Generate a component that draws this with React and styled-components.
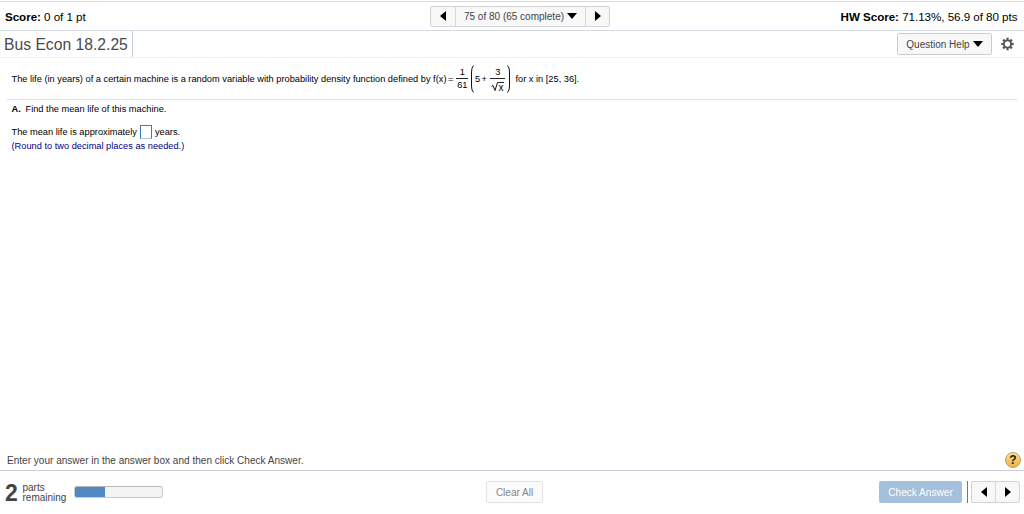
import React from 'react';
import styled, { createGlobalStyle } from 'styled-components';

const GlobalStyle = createGlobalStyle`
  * { box-sizing: border-box; }
  body { margin: 0; background: #fff; overflow: hidden; }
  button { font: inherit; color: inherit; margin: 0; padding: 0; }
`;

const Page = styled.div`
  display: flex;
  flex-direction: column;
  width: 1024px;
  height: 514px;
  padding-top: 1px;
  font-family: "Liberation Sans", Arial, sans-serif;
  color: #000;
  white-space: nowrap;
`;

const ScoreBar = styled.header`
  display: grid;
  grid-template-columns: 425px 180px 1fr;
  align-items: center;
  height: 30px;
  padding: 0 6.5px 0 5px;
  border-top: 1px solid #d9dcdf;
  border-bottom: 1px solid #d3dae2;
  font-size: 11.6px;
`;

const Score = styled.div`
  justify-self: ${(p) => (p.$end ? 'end' : 'start')};
  letter-spacing: -0.03px;
  padding-top: 1px;
`;

const ButtonGroup = styled.div`
  display: flex;
  height: ${(p) => p.$height || 21}px;
  border: 1px solid #d2d2d2;
  border-radius: 2px;
  background: #f8f8f8;
`;

const Segment = styled.button`
  display: flex;
  align-items: center;
  justify-content: center;
  gap: 3px;
  width: ${(p) => p.$width}px;
  border: 0;
  border-left: ${(p) => (p.$divided ? '1px solid #d8d8d8' : '0')};
  background: transparent;
  color: #444;
  font-size: 10px;
`;

const TitleBar = styled.div`
  display: flex;
  justify-content: space-between;
  height: 27px;
  padding-right: 10px;
  border-bottom: 1px solid #f1f1f1;
`;

const Title = styled.h1`
  width: 133px;
  height: 26px;
  margin: 0;
  padding-left: 4px;
  border-right: 1px solid #c4cedd;
  color: #4a4a4a;
  font-size: 15.7px;
  font-weight: 400;
  line-height: 27px;
`;

const Tools = styled.div`
  display: flex;
  align-items: center;
  gap: 9px;
`;

const HelpButton = styled.button`
  display: flex;
  align-items: center;
  justify-content: center;
  gap: 3px;
  width: 95px;
  height: 22px;
  border: 1px solid #ccc;
  border-radius: 2px;
  background: #f8f8f8;
  color: #444;
  font-size: 10px;
`;

const Content = styled.main`
  display: flex;
  flex-direction: column;
  flex: 1;
  padding: 0 7px;
  font-size: 9.26px;
`;

const Problem = styled.p`
  display: flex;
  align-items: center;
  height: 42px;
  margin: 0;
  padding: 0 0 0 4.5px;
  border-bottom: 1px solid #e0e0e0;
`;

const Sentence = styled.span`
  margin-left: ${(p) => p.$left || 0}px;
  padding-top: 1px;
`;

const Operator = styled.span`
  margin-left: 1.5px;
`;

const Fraction = styled.span`
  display: flex;
  flex-direction: column;
  align-items: center;
  width: ${(p) => p.$width}px;
  margin: 0 ${(p) => p.$right}px 0 ${(p) => p.$left}px;
  line-height: 12px;
`;

const Numerator = styled.span`
  align-self: stretch;
  height: 13px;
  border-bottom: 1px solid #222;
  text-align: center;
`;

const Denominator = styled.span`
  display: flex;
  height: 13px;
`;

const Radicand = styled.span`
  height: 11px;
  margin-top: 3px;
  padding: 0 1px 0 0;
  border-top: 1px solid #222;
  font-size: 10px;
  line-height: 9px;
`;

const Line = styled.p`
  display: flex;
  align-items: center;
  height: ${(p) => p.$height}px;
  margin: ${(p) => p.$top || 0}px 0 0 4.5px;
  color: ${(p) => p.$color || '#000'};
`;

const PartLabel = styled.b`
  width: 14px;
`;

const AnswerBox = styled.input`
  width: 12px;
  height: 14px;
  margin: 0 3px;
  padding: 0;
  border: 1px solid #3c7cae;
  border-bottom-color: #a9c9dc;
  border-radius: 0;
  background: #fff;
`;

const Hint = styled.div`
  display: flex;
  align-items: center;
  justify-content: space-between;
  height: 20px;
  padding: 0 3px 0 7px;
  color: #444;
  font-size: 10.05px;
`;

const Footer = styled.footer`
  display: grid;
  grid-template-columns: 481px 57px 1fr;
  align-items: center;
  height: 44px;
  padding: 0 4px 1px 5px;
  border-top: 1px solid #cfcfdc;
`;

const Progress = styled.div`
  display: flex;
  align-items: center;
`;

const Count = styled.b`
  width: 17.5px;
  color: #444;
  font-size: 23px;
  line-height: 24px;
  padding-top: 1px;
`;

const CountLabel = styled.span`
  width: 51.5px;
  padding-top: 1px;
  color: #444;
  font-size: 10px;
  line-height: 10px;
`;

const Track = styled.div`
  width: 89px;
  height: 12px;
  overflow: hidden;
  border: 1px solid #ccc;
  border-top-color: #b8b8b8;
  border-radius: 3px;
  background: #f3f3f3;
`;

const Fill = styled.div`
  width: 29px;
  height: 10px;
  background: #4f8ac5;
  box-shadow: 0 0 0 1px #4f8ac5;
`;

const ClearButton = styled.button`
  height: 22px;
  border: 1px solid #e2e2e2;
  border-radius: 2px;
  background: #fbfbfb;
  color: #858585;
  font-size: 10px;
`;

const Actions = styled.div`
  display: flex;
  align-items: center;
  justify-self: end;
`;

const CheckButton = styled.button`
  width: 83px;
  height: 22px;
  border: 0;
  border-radius: 2px;
  background: #a4c0dc;
  color: #fff;
  font-size: 10.1px;
`;

const Divider = styled.span`
  width: 1px;
  height: 22px;
  margin: 0 3px 0 5px;
  background: #777;
`;

const Svg = styled.svg`
  display: block;
  flex: none;
`;

const arrows = {
  left: ['0 0 6 10', 'M6 0V10L0 5Z', 6, 10],
  right: ['0 0 6 10', 'M0 0V10L6 5Z', 6, 10],
  down: ['0 0 10 6', 'M0 0H10L5 6Z', 10, 6],
};

function Arrow({ to }) {
  const [box, d, w, h] = arrows[to];
  return <Svg viewBox={box} width={w} height={h}><path d={d} fill="#000" /></Svg>;
}

function Gear() {
  return (
    <Svg width="13" height="14" viewBox="0 0 14 14" fill="none" stroke="#555">
      <circle cx="7" cy="7" r="3.9" strokeWidth="2" />
      {[0, 45, 90, 135, 180, 225, 270, 315].map((a) => (
        <path key={a} d="M7 .3V2.6" strokeWidth="2.4" transform={`rotate(${a} 7 7)`} />
      ))}
    </Svg>
  );
}

function Paren({ close }) {
  return (
    <Svg width="4" height="28" viewBox="0 0 4 28" fill="none" stroke="#111">
      <path d={close ? 'M.5 .5Q2.5 2.5 2.5 7V21Q2.5 25.5 .5 27.5' : 'M3.5 .5Q1.5 2.5 1.5 7V21Q1.5 25.5 3.5 27.5'} />
    </Svg>
  );
}

const HelpBadge = styled.button`
  width: 16px;
  height: 16px;
  border: 1px solid #b5a070;
  border-radius: 50%;
  background: linear-gradient(#ffe08c, #efb440);
  color: #222;
  font-size: 12px;
  font-weight: 700;
  line-height: 14px;
`;

export default function App() {
  return (
    <Page>
      <GlobalStyle />
      <ScoreBar>
        <Score><b>Score:</b> 0 of 1 pt</Score>
        <ButtonGroup>
          <Segment $width={24} aria-label="Previous question"><Arrow to="left" /></Segment>
          <Segment $width={130} $divided>75 of 80 (65 complete) <Arrow to="down" /></Segment>
          <Segment $width={24} $divided aria-label="Next question"><Arrow to="right" /></Segment>
        </ButtonGroup>
        <Score $end><b>HW Score:</b> 71.13%, 56.9 of 80 pts</Score>
      </ScoreBar>
      <TitleBar>
        <Title>Bus Econ 18.2.25</Title>
        <Tools>
          <HelpButton>Question Help <Arrow to="down" /></HelpButton>
          <Gear />
        </Tools>
      </TitleBar>
      <Content>
        <Problem>
          <Sentence>The life (in years) of a certain machine is a random variable with probability density function defined by f(x)<Operator>=</Operator></Sentence>
          <Fraction $width={12} $left={3} $right={2}>
            <Numerator>1</Numerator>
            <Denominator>61</Denominator>
          </Fraction>
          <Paren />
          <Sentence $left={0.5}>5<Operator>+</Operator></Sentence>
          <Fraction $width={15} $left={3.5} $right={2}>
            <Numerator>3</Numerator>
            <Denominator>
              <Svg width="7" height="12" viewBox="0 0 7 12" fill="none" stroke="#111">
                <path d="M.5 7.5L2 6.5L4 11.5L6.5 3.5H7" />
              </Svg>
              <Radicand>x</Radicand>
            </Denominator>
          </Fraction>
          <Paren close />
          <Sentence $left={4}>for x in [25, 36].</Sentence>
        </Problem>
        <Line $height={18}><PartLabel>A.</PartLabel>Find the mean life of this machine.</Line>
        <Line $height={14} $top={7}>The mean life is approximately <AnswerBox aria-label="Mean life in years" /> years.</Line>
        <Line $height={13} $color="#00007f">(Round to two decimal places as needed.)</Line>
      </Content>
      <Hint>
        Enter your answer in the answer box and then click Check Answer.
        <HelpBadge>?</HelpBadge>
      </Hint>
      <Footer>
        <Progress>
          <Count>2</Count>
          <CountLabel>parts<br />remaining</CountLabel>
          <Track><Fill /></Track>
        </Progress>
        <ClearButton>Clear All</ClearButton>
        <Actions>
          <CheckButton>Check Answer</CheckButton>
          <Divider />
          <ButtonGroup $height={22}>
            <Segment $width={23} aria-label="Previous part"><Arrow to="left" /></Segment>
            <Segment $width={24} $divided aria-label="Next part"><Arrow to="right" /></Segment>
          </ButtonGroup>
        </Actions>
      </Footer>
    </Page>
  );
}
